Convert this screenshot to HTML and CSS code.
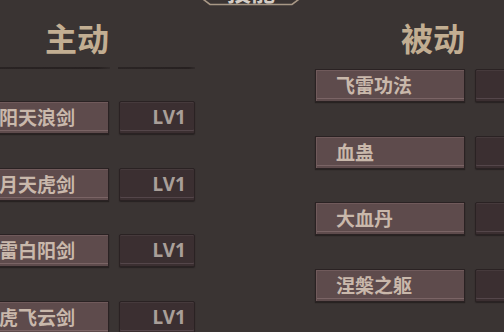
FILE: index.html
```html
<!DOCTYPE html>
<html lang="zh">
<head>
<meta charset="utf-8">
<title>技能</title>
<link rel="stylesheet" href="styles.css">
</head>
<body>
<div class="screen">
  <div class="tab">
    <svg class="tab-frame" width="114" height="30" viewBox="0 0 114 30">
      <polygon points="1,-2 1,17 16,28.5 98,28.5 113,17 113,-2" fill="#3a3433" stroke="#a89886" stroke-width="1.6"/>
    </svg>
    <span class="tab-label">技能</span>
  </div>
  <div class="columns">
    <section class="col active">
      <h2 class="col-title">主动</h2>
      <div class="rule"><i class="rule-name"></i><i class="rule-lv"></i></div>
      <ul class="skills">
        <li class="skill"><span class="name">烈阳天浪剑</span><span class="lv">LV1</span></li>
        <li class="skill"><span class="name">残月天虎剑</span><span class="lv">LV1</span></li>
        <li class="skill"><span class="name">惊雷白阳剑</span><span class="lv">LV1</span></li>
        <li class="skill"><span class="name">猛虎飞云剑</span><span class="lv">LV1</span></li>
      </ul>
    </section>
    <section class="col passive">
      <h2 class="col-title">被动</h2>
      <ul class="skills">
        <li class="skill"><span class="name">飞雷功法</span><span class="lv">LV1</span></li>
        <li class="skill"><span class="name">血蛊</span><span class="lv">LV1</span></li>
        <li class="skill"><span class="name">大血丹</span><span class="lv">LV1</span></li>
        <li class="skill"><span class="name">涅槃之躯</span><span class="lv">LV1</span></li>
      </ul>
    </section>
  </div>
</div>
</body>
</html>
```
FILE: styles.css
```css
html, body {
  margin: 0;
  padding: 0;
  background: #3a3433;
}
body {
  width: 504px;
  height: 332px;
  overflow: hidden;
  font-family: "Noto Sans CJK SC", "Noto Sans", sans-serif;
}
.screen {
  position: relative;
  width: 504px;
  height: 332px;
  overflow: hidden;
}
.tab {
  position: absolute;
  left: 194px;
  top: -24px;
  width: 114px;
  height: 30px;
}
.tab-frame {
  display: block;
}
.tab-label {
  position: absolute;
  left: 0;
  right: 0;
  top: 3px;
  text-align: center;
  font-size: 24px;
  line-height: 24px;
  font-weight: 700;
  color: #d4ccc4;
}
.columns {
  display: flex;
  gap: 120px;
  margin-left: -41px;
}
.col {
  width: 236px;
  flex: none;
  padding-top: 21px;
}
.col-title {
  margin: 0;
  text-align: center;
  font-size: 32px;
  line-height: 32px;
  font-weight: 700;
  color: #c2ae92;
}
.rule {
  display: flex;
  gap: 8px;
  margin: 14px 0 32px;
  height: 2px;
}
.rule i {
  display: block;
  height: 2px;
  background: linear-gradient(90deg, #2a2424 0%, #262020 92%, rgba(38,32,32,0.4) 100%);
}
.rule-name { width: 151px; }
.rule-lv { width: 77px; }
.passive .skills {
  margin-top: 16px;
}
.skills {
  list-style: none;
  margin: 0;
  padding: 0;
  display: flex;
  flex-direction: column;
  gap: 33.5px;
}
.skill {
  display: flex;
  gap: 10px;
  height: 33px;
}
.name {
  box-sizing: border-box;
  width: 150px;
  height: 33px;
  padding-left: 20px;
  background: #5e4b4c;
  border: 1px solid #2a2223;
  box-shadow: inset 1px 1px 0 #705a5b, inset 0 -2px 0 #5e4b4c, inset 0 -3px 0 #7a6465, 0 1px 1px rgba(20,15,15,0.5);
  color: #c9b8ab;
  font-size: 19px;
  line-height: 30px;
  font-weight: 700;
  white-space: nowrap;
}
.lv {
  box-sizing: border-box;
  width: 76px;
  height: 33px;
  padding-right: 8px;
  text-align: right;
  background: #3b2f31;
  border: 1px solid #2a2223;
  border-radius: 2px;
  box-shadow: inset 0 1px 0 #463a3c, inset 0 -2px 0 #3b2f31, inset 0 -3px 0 #54464a, 0 1px 1px rgba(20,15,15,0.5);
  color: #a99f99;
  font-family: "Noto Sans", sans-serif;
  font-size: 19px;
  line-height: 31px;
  font-weight: 700;
}
```
